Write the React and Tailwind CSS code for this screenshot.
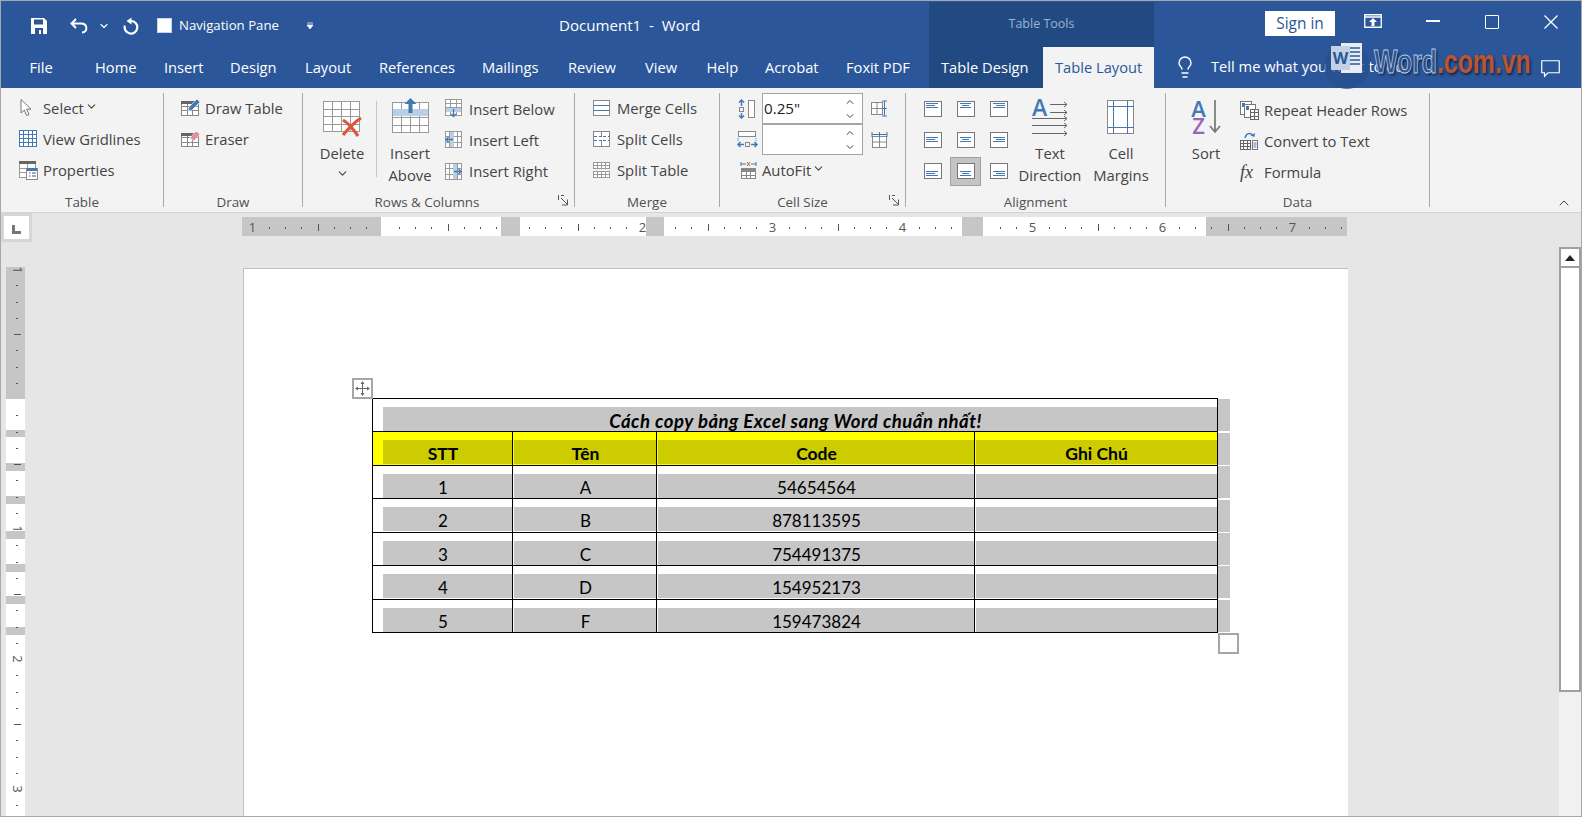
import { ChevronDown, ChevronUp, Lightbulb } from 'lucide-react'

const BLUE = '#4279b5'
const GREY = '#7c7c7c'

// grid of thin lines, used by most of the table icons
function Cells({ x = 0.5, y = 0.5, w, h, cols, rows, stroke = GREY }) {
  const v = []
  const hz = []
  for (let i = 1; i < cols; i++) v.push(x + Math.round((w * i) / cols))
  for (let i = 1; i < rows; i++) hz.push(y + Math.round((h * i) / rows))
  return (
    <g stroke={stroke} fill="none" shapeRendering="crispEdges">
      <rect x={x} y={y} width={w} height={h} fill="#fff" />
      {v.map((p) => <line key={p} x1={p} x2={p} y1={y} y2={y + h} />)}
      {hz.map((p) => <line key={p} x1={x} x2={x + w} y1={p} y2={p} />)}
    </g>
  )
}

const Svg = ({ w, h, children }) => (
  <svg width={w} height={h} viewBox={`0 0 ${w} ${h}`} className="block shrink-0 overflow-visible">{children}</svg>
)

const SelectIcon = () => (
  <Svg w={14} h={19}><path d="M2 1.500v13.500l3.200-3 2.400 5.500 2.400-1-2.400-5.300h4.400z" fill="#fff" stroke="#777" /></Svg>
)
const GridlinesIcon = () => <Svg w={18} h={17}><Cells w={17} h={16} cols={4} rows={4} stroke={BLUE} /></Svg>
const PropertiesIcon = () => (
  <Svg w={19} h={19}>
    <Cells y={2.500} w={16} h={14} cols={2} rows={3} stroke="#999" />
    <rect x="0" y="0" width="17" height="3" fill="#666" />
    <rect x="7.500" y="7.500" width="11" height="11" fill="#fff" stroke="#888" />
    <rect x="8" y="7" width="10" height="3" fill={BLUE} />
    <path d="M10 12h1.500M13 12h4M10 15h1.500M13 15h4" stroke="#555" />
  </Svg>
)
const DrawTableIcon = () => (
  <Svg w={20} h={19}>
    <Cells y={3.500} w={17} h={14} cols={3} rows={3} stroke="#888" />
    <rect x="0" y="3" width="18" height="3" fill="#666" />
    <path d="M7 13l1-4 8-8 3 3-8 8z" fill={BLUE} stroke="#fff" strokeWidth=".6" />
  </Svg>
)
const EraserIcon = () => (
  <Svg w={20} h={18}>
    <Cells y={3.500} w={17} h={13} cols={3} rows={3} stroke="#888" />
    <rect x="0" y="3" width="18" height="3" fill="#666" />
    <path d="M9 8l6-7 4 3-6 7z" fill="#e8899a" stroke="#fff" strokeWidth=".6" />
  </Svg>
)
const DeleteIcon = () => (
  <Svg w={39} h={37}>
    <Cells w={36} h={30} cols={4} rows={4} stroke="#999" />
    <path d="M20 34c5-6 10-12 18-17M20 19c5 3 11 10 15 16" stroke="#d9583b" strokeWidth="3.200" fill="none" />
  </Svg>
)
const InsertAboveIcon = () => (
  <Svg w={37} h={36}>
    <g transform="translate(0 5)"><Cells w={36} h={30} cols={4} rows={4} stroke="#999" /></g>
    <rect x="1" y="12" width="35" height="7" fill="#b8cfe6" />
    <path d="M18.500 1l-6 6h4v9h4V7h4z" fill={BLUE} />
  </Svg>
)
const InsertBelowIcon = () => (
  <Svg w={17} h={19}>
    <Cells w={16} h={16} cols={3} rows={4} stroke="#999" />
    <rect x="1" y="9" width="15" height="4" fill="#b8cfe6" />
    <path d="M8.500 10v7M6 15l2.500 2.500L11 15" stroke={BLUE} strokeWidth="1.400" fill="none" />
  </Svg>
)
const InsertLeftIcon = () => (
  <Svg w={17} h={17}>
    <Cells w={16} h={16} cols={4} rows={3} stroke="#999" />
    <rect x="5" y="1" width="4" height="15" fill="#b8cfe6" />
    <path d="M8 8.500H1M3.500 6L1 8.500 3.500 11" stroke={BLUE} strokeWidth="1.400" fill="none" />
  </Svg>
)
const InsertRightIcon = () => (
  <Svg w={17} h={17}>
    <Cells w={16} h={16} cols={4} rows={3} stroke="#999" />
    <rect x="8" y="1" width="4" height="15" fill="#b8cfe6" />
    <path d="M9 8.500h7M13.500 6L16 8.500 13.500 11" stroke={BLUE} strokeWidth="1.400" fill="none" />
  </Svg>
)
const MergeIcon = () => (
  <Svg w={17} h={16}>
    <Cells w={16} h={15} cols={1} rows={3} stroke="#888" />
    <path d="M1 5.500h15M1 10.500h15" stroke={BLUE} shapeRendering="crispEdges" />
  </Svg>
)
const SplitCellsIcon = () => (
  <Svg w={17} h={16}>
    <rect x=".5" y=".5" width="16" height="15" fill="#fff" stroke="#888" shapeRendering="crispEdges" />
    <path d="M8.500 1v4M8.500 10v5" stroke="#888" shapeRendering="crispEdges" />
    <path d="M1 5.500h15M1 9.500h15" stroke={BLUE} strokeDasharray="3 1.500" shapeRendering="crispEdges" />
  </Svg>
)
const SplitTableIcon = () => (
  <Svg w={17} h={16}>
    <Cells w={16} h={6} cols={4} rows={2} stroke="#999" />
    <g transform="translate(0 9)"><Cells w={16} h={6} cols={4} rows={2} stroke="#999" /></g>
  </Svg>
)
const HeightIcon = () => (
  <Svg w={19} h={20}>
    <rect x="11.500" y="1.500" width="6" height="17" fill="#fff" stroke="#888" />
    <rect x="2.500" y="8.500" width="4" height="4" fill="none" stroke="#888" />
    <path d="M4.500 7V1M2 3.500L4.500 1 7 3.500M4.500 14v5M2 16.500L4.500 19 7 16.500" stroke={BLUE} strokeWidth="1.500" fill="none" />
  </Svg>
)
const WidthIcon = () => (
  <Svg w={20} h={19}>
    <rect x="1.500" y="1.500" width="17" height="5" fill="#fff" stroke="#888" />
    <rect x="8.500" y="12.500" width="4" height="4" fill="none" stroke="#888" />
    <path d="M7 14.500H1M3.500 12L1 14.500 3.500 17M14 14.500h6M17.500 12l2.500 2.500-2.500 2.500" stroke={BLUE} strokeWidth="1.500" fill="none" />
    <path d="M1 8v3M19 8v3" stroke={BLUE} strokeDasharray="1 1" />
  </Svg>
)
const DistRowsIcon = () => (
  <Svg w={17} h={17}>
    <rect x=".5" y="2.500" width="11" height="12" fill="#fff" stroke="#888" />
    <path d="M6 2.500v12M.5 8.500h11" stroke="#888" />
    <path d="M13.500 1v15M11 1h5M11 8.500h5M11 16h5" stroke={BLUE} />
  </Svg>
)
const DistColsIcon = () => (
  <Svg w={17} h={17}>
    <rect x="1.500" y="5.500" width="14" height="11" fill="#fff" stroke="#888" />
    <path d="M8.500 5.500v11M1.500 11h14" stroke="#888" />
    <path d="M1 3.500h15M1 1v5M8.500 1v5M16 1v5" stroke={BLUE} />
  </Svg>
)
const AutoFitIcon = () => (
  <Svg w={18} h={18}>
    <g transform="translate(1 7)"><Cells w={14} h={10} cols={3} rows={3} stroke="#888" /></g>
    <rect x="1" y="7" width="15" height="3" fill="#888" />
    <path d="M1 3h5M1 1v4M16 3h-5M16 1v4" stroke={BLUE} />
    <path d="M7 1l3 4M10 1L7 5" stroke="#c9583c" />
  </Svg>
)

// x offsets of the blue text lines per horizontal align, y offset per vertical align
function AlignIcon({ h, v }) {
  const lines = h === 'l' ? [[2, 12], [2, 9], [2, 12]] : h === 'c' ? [[3, 11], [5, 7], [3, 11]] : [[3, 12], [6, 9], [3, 12]]
  const top = v === 't' ? 2 : v === 'm' ? 5 : 8
  return (
    <Svg w={18} h={16}>
      <rect x=".5" y=".5" width="17" height="15" fill="#fff" stroke="#777" shapeRendering="crispEdges" />
      {lines.map(([x, len], i) => (
        <rect key={i} x={x} y={top + i * 2} width={len} height="1" fill={BLUE} />
      ))}
    </Svg>
  )
}

const TextDirectionIcon = () => (
  <Svg w={37} h={36}>
    <text x="0" y="16" fontFamily="Open Sans, sans-serif" fontWeight="600" fontSize="23" fill={BLUE}>A</text>
    <g stroke="#666" fill="none">
      <path d="M18 4.500h17M32 2l3 2.500-3 2.500M18 12.500h17M32 10l3 2.500-3 2.500" />
      <path d="M0 18.500h35M32 16l3 2.500-3 2.500M0 25.500h35M32 23l3 2.500-3 2.500M0 33.500h35M32 31l3 2.500-3 2.500" />
    </g>
  </Svg>
)
const CellMarginsIcon = () => (
  <Svg w={28} h={35}>
    <rect x=".5" y=".5" width="26" height="33" fill="#fff" stroke="#888" shapeRendering="crispEdges" />
    <path d="M6.500 1v33M20.500 1v33M1 6.500h26M1 27.500h26" stroke={BLUE} strokeWidth="1.200" shapeRendering="crispEdges" />
  </Svg>
)
const SortIcon = () => (
  <div className="flex">
    <div className="flex w-[16px] flex-col items-center text-[22px] leading-[17px] font-semibold">
      <span className="text-[#4279b5]">A</span>
      <span className="text-[#9a63b8]">Z</span>
    </div>
    <svg width="14" height="34" viewBox="0 0 14 34" className="ml-[1px]">
      <path d="M7 0v31M2 26l5 6 5-6" stroke="#777" strokeWidth="1.700" fill="none" />
    </svg>
  </div>
)
const RepeatIcon = () => (
  <Svg w={18} h={18}>
    <rect x=".5" y=".5" width="11" height="13" fill="#fff" stroke="#777" />
    <rect x="2" y="2" width="3" height="4" fill={BLUE} />
    <rect x="4.500" y="3.500" width="11" height="13" fill="#fff" stroke="#777" />
    <rect x="6" y="5" width="3" height="4" fill={BLUE} />
    <g transform="translate(9.500 7.500)"><Cells w={8} h={10} cols={2} rows={3} stroke="#666" /></g>
  </Svg>
)
const ConvertIcon = () => (
  <Svg w={18} h={19}>
    <g transform="translate(0 9)"><Cells w={10} h={9} cols={3} rows={3} stroke="#666" /></g>
    <rect x="12.500" y="9.500" width="5" height="9" fill="#fff" stroke="#777" />
    <path d="M13.500 12h3M13.500 14h3M13.500 16h3" stroke={BLUE} />
    <path d="M5 7c1-5 6-6 8-2" stroke={BLUE} strokeWidth="1.400" fill="none" />
    <path d="M10.500 4.500l4 1.500.500-4z" fill={BLUE} />
  </Svg>
)

// one small ribbon command: icon then label
function Cmd({ icon, label, box = 'w-[24px]', chevron }) {
  return (
    <div className="flex h-[31.300px] -translate-y-px items-center whitespace-nowrap">
      <div className={`${box} flex items-center`}>{icon}</div>
      <span>{label}</span>
      {chevron && <ChevronDown size={13} strokeWidth={2} className="ml-[1px] mt-[-2px]" />}
    </div>
  )
}

function Big({ icon, top, lines, width, chevron }) {
  return (
    <div className={`${width} flex shrink-0 flex-col items-center`}>
      <div className={`h-[49px] ${top}`}>{icon}</div>
      {lines.map((l) => <div key={l} className="h-[22px] whitespace-nowrap leading-[22px]">{l}</div>)}
      {chevron && <ChevronDown size={13} strokeWidth={2} className="mt-[3px]" />}
    </div>
  )
}

const Launcher = () => (
  <svg width="11" height="11" viewBox="0 0 11 11" className="absolute bottom-[1px] right-[5px]">
    <path d="M.5 0v5M3 .5h3M3 3l6 6M9.500 4.500V10H4" stroke="#555" fill="none" />
  </svg>
)

function Group({ width, title, titleClass = '', launcher, children }) {
  return (
    <div className={`${width} relative h-[114px] shrink-0 border-r border-[#a9a9a9]`}>
      <div className="h-[103px]">{children}</div>
      <div className={`h-[12px] text-center text-[13.400px] leading-[12px] text-[#505050] ${titleClass}`}>{title}</div>
      {launcher && <Launcher />}
    </div>
  )
}

function Spinner({ value }) {
  return (
    <div className="flex h-[31px] w-[101px] items-center justify-between border border-[#a5a5a5] bg-white pl-[1px] pr-[6px] text-[15.200px] text-[#222]">
      <span>{value}</span>
      <span className="flex flex-col gap-[2px] text-[#444]">
        <ChevronUp size={12} strokeWidth={2} />
        <ChevronDown size={12} strokeWidth={2} />
      </span>
    </div>
  )
}

const tabs = [
  ['File', 'w-[65.500px]'], ['Home', 'w-[69px]'], ['Insert', 'w-[66px]'], ['Design', 'w-[75px]'],
  ['Layout', 'w-[74px]'], ['References', 'w-[103px]'], ['Mailings', 'w-[86px]'], ['Review', 'w-[77px]'],
  ['View', 'w-[61.500px]'], ['Help', 'w-[58.500px]'], ['Acrobat', 'w-[81px]'], ['Foxit PDF', 'w-[83px]'],
]

// margin blocks of the table columns hide the ruler ticks
const inBlock = (x) => (x > 258 && x < 279) || (x > 403 && x < 423) || (x > 719 && x < 742)

function HRuler() {
  const ticks = []
  for (let k = -8; k < 60; k++) ticks.push(k)
  return (
    <div className="relative ml-[210px] mt-[4px] flex h-[19px] w-[1105px]">
      <div className="w-[139px] bg-[#c6c6c6]" />
      <div className="w-[120px] bg-white" />
      <div className="w-[19px] bg-[#c6c6c6]" />
      <div className="w-[126px] bg-white" />
      <div className="w-[18px] bg-[#c6c6c6]" />
      <div className="w-[298px] bg-white" />
      <div className="w-[21px] bg-[#c6c6c6]" />
      <div className="w-[223px] bg-white" />
      <div className="w-[141px] bg-[#c6c6c6]" />
      <svg width="1105" height="19" className="absolute left-0 top-0 overflow-visible">
        {ticks.map((k) => {
          const x = 140.500 + k * 16.250
          if (x < 0 || x > 1100 || k === 0) return null
          if (k % 8 === 0) {
            if (k / 8 === 1) return null
            return <text key={k} x={x} y="15" textAnchor="middle" fontSize="13" fontFamily="Open Sans, sans-serif" fill="#555">{Math.abs(k / 8)}</text>
          }
          if (inBlock(x)) return null
          if (((k % 8) + 8) % 8 === 4) return <rect key={k} x={Math.round(x)} y="7" width="1" height="7" fill="#555" />
          return <rect key={k} x={Math.round(x)} y="10" width="1" height="2" fill="#555" />
        })}
      </svg>
    </div>
  )
}

function VRuler() {
  const ticks = []
  for (let k = -7; k < 26; k++) ticks.push(k)
  return (
    <div className="relative ml-[5px] mt-[25px] flex h-[549px] w-[19px] shrink-0 flex-col">
      <div className="h-[132px] bg-[#c6c6c6]" />
      <div className="h-[31px] bg-white" />
      <div className="h-[7px] bg-[#c6c6c6]" />
      <div className="h-[26px] bg-white" />
      <div className="h-[8px] bg-[#c6c6c6]" />
      <div className="h-[25px] bg-white" />
      <div className="h-[8px] bg-[#c6c6c6]" />
      <div className="h-[27px] bg-white" />
      <div className="h-[8px] bg-[#c6c6c6]" />
      <div className="h-[25px] bg-white" />
      <div className="h-[8px] bg-[#c6c6c6]" />
      <div className="h-[24px] bg-white" />
      <div className="h-[8px] bg-[#c6c6c6]" />
      <div className="h-[23px] bg-white" />
      <div className="h-[8px] bg-[#c6c6c6]" />
      <div className="flex-1 bg-white" />
      <svg width="19" height="549" className="absolute left-0 top-0 overflow-visible">
        <g transform="translate(11 3) rotate(90)">
          <text x="0" y="4" textAnchor="middle" fontSize="13" fontFamily="Open Sans, sans-serif" fill="#555">1</text>
        </g>
        {ticks.map((k) => {
          const y = 132 + k * 16.250
          if (k === 0) return null
          if (k % 8 === 0) {
            return (
              <g key={k} transform={`translate(11 ${y}) rotate(90)`}>
                <text x="0" y="4" textAnchor="middle" fontSize="13" fontFamily="Open Sans, sans-serif" fill="#555">{k / 8}</text>
              </g>
            )
          }
          if (((k % 8) + 8) % 8 === 4) return <rect key={k} x="8" y={Math.round(y)} width="7" height="1" fill="#555" />
          return <rect key={k} x="10" y={Math.round(y)} width="2" height="1" fill="#555" />
        })}
      </svg>
    </div>
  )
}

const rows = [
  ['1', 'A', '54654564'], ['2', 'B', '878113595'], ['3', 'C', '754491375'],
  ['4', 'D', '154952173'], ['5', 'F', '159473824'],
]

function Mark() {
  return <td className="border-0 p-0 align-middle"><div className="h-[32px] bg-[#c6c6c6]" /></td>
}

function DocTable() {
  const td = 'h-[33.450px] border border-black p-0 align-top'
  const head = 'h-[33.450px] border border-black bg-[#ffff00] p-0 align-top'
  const band = 'mt-[8px] h-[24px] text-center leading-[28px]'
  return (
    <div className="relative ml-[128px] w-[857px]">
      <table className="w-[857px] table-fixed border-collapse font-['Lato',sans-serif] text-[17px] text-black">
        <colgroup>
          <col className="w-[140px]" />
          <col className="w-[144px]" />
          <col className="w-[318px]" />
          <col className="w-[243px]" />
          <col className="w-[12px]" />
        </colgroup>
        <tbody>
          <tr>
            <td colSpan={4} className={td}>
              <div className={`${band} ml-[10px] bg-[#c6c6c6] pr-[9px] text-[18.500px] font-bold italic tracking-[0.5px]`}>Cách copy bảng Excel sang Word chuẩn nhất!</div>
            </td>
            <Mark />
          </tr>
          <tr className="text-[17.500px] font-bold">
            <td className={head}><div className={`${band} ml-[10px] bg-[#cccc00] pr-[9px]`}>STT</div></td>
            <td className={head}><div className={`${band} ml-px bg-[#cccc00] pl-px`}>Tên</div></td>
            <td className={head}><div className={`${band} ml-px bg-[#cccc00] pl-px`}>Code</div></td>
            <td className={head}><div className={`${band} ml-px bg-[#cccc00]`}>Ghi Chú</div></td>
            <Mark />
          </tr>
          {rows.map((r) => (
            <tr key={r[0]}>
              <td className={td}><div className={`${band} ml-[10px] bg-[#c6c6c6] pr-[9px]`}>{r[0]}</div></td>
              <td className={td}><div className={`${band} ml-px bg-[#c6c6c6] pl-px`}>{r[1]}</div></td>
              <td className={td}><div className={`${band} ml-px bg-[#c6c6c6] pl-px`}>{r[2]}</div></td>
              <td className={td}><div className={`${band} ml-px bg-[#c6c6c6]`}>&nbsp;</div></td>
              <Mark />
            </tr>
          ))}
        </tbody>
      </table>
      {/* table move handle and resize handle sit over the page */}
      <div className="absolute left-[-20px] top-[-20px] flex h-[21px] w-[21px] items-center justify-center border-2 border-[#a6a6a6] bg-white">
        <svg width="15" height="15" viewBox="0 0 15 15">
          <path d="M7.500 2v11M2 7.500h11" stroke="#666" />
          <path d="M7.500 0l-2 3h4zM7.500 15l-2-3h4zM0 7.500l3-2v4zM15 7.500l-3-2v4z" fill="#666" />
        </svg>
      </div>
      <div className="absolute left-[846px] top-[235px] h-[21px] w-[21px] border-2 border-[#a6a6a6] bg-white" />
    </div>
  )
}

export default function App() {
  return (
    <div className="relative flex h-[817px] w-full flex-col overflow-hidden border border-[#a8a8a8] bg-[#e6e6e6] font-['Open_Sans',sans-serif] text-[14.800px] text-[#444]">
      {/* title bar */}
      <div className="flex h-[46px] shrink-0 items-start bg-[#2b579a] text-white">
        <div className="flex w-[558px] items-center pt-[15px]">
          <svg width="16" height="16" viewBox="0 0 16 16" className="ml-[30px]">
            <path d="M0 0h13l3 3v13H0z" fill="#fff" />
            <rect x="3" y="1.500" width="9" height="5" fill="#2b579a" />
            <rect x="4" y="10" width="8" height="6" fill="#2b579a" />
            <rect x="8" y="12" width="2" height="4" fill="#fff" />
          </svg>
          <svg width="18" height="16" viewBox="0 0 18 16" className="ml-[23px]">
            <path d="M6 1L1.500 5.500 6 10M2 5.500h9c7 0 7 9 1 9" fill="none" stroke="#fff" strokeWidth="2" />
          </svg>
          <ChevronDown size={12} strokeWidth={2.200} className="ml-[10px]" />
          <svg width="18" height="18" viewBox="0 0 18 18" className="ml-[12px]">
            <path d="M9 4a6.300 6.300 0 1 1-6.100 4.600" fill="none" stroke="#fff" strokeWidth="2.200" />
            <path d="M9.500.500v7L4.500 4z" fill="#fff" />
          </svg>
          <div className="ml-[17px] h-[15px] w-[15px] border border-[#c9d4e6] bg-white" />
          <span className="ml-[7px] w-[120px] whitespace-nowrap text-[13.200px]">Navigation Pane</span>
          <svg width="8" height="8" viewBox="0 0 8 8" className="ml-[7px]">
            <path d="M1 1h6M1 3h6l-3 4z" fill="#fff" stroke="#fff" strokeWidth=".7" />
          </svg>
        </div>
        <div className="w-[370px] pt-[14px] text-[15.100px] leading-[21px] whitespace-pre">Document1  -  Word</div>
        <div className="h-[45px] w-[225px] self-end bg-[#214a82] pt-[13px] text-center text-[12.500px] text-[#9db2d2]">Table Tools</div>
        <div className="ml-[111px] mt-[10px] h-[25px] w-[70px] bg-white text-center text-[15.400px] leading-[25px] text-[#2b579a]">Sign in</div>
        <svg width="18" height="14" viewBox="0 0 18 14" className="ml-[29px] mt-[13px]">
          <path d="M.750.750h16.500v12.500H.750zM1 3h16" fill="none" stroke="#fff" strokeWidth="1.300" />
          <path d="M9 4l-4 4h2.500v4h3V8H13z" fill="#fff" />
        </svg>
        <div className="ml-[44px] mt-[19px] h-[1.500px] w-[14px] bg-white" />
        <div className="ml-[45px] mt-[14px] h-[14px] w-[14px] rounded-[1px] border-[1.500px] border-white" />
        <svg width="14" height="14" viewBox="0 0 14 14" className="ml-[45px] mt-[14px]">
          <path d="M.500.500l13 13M13.500.500l-13 13" stroke="#fff" strokeWidth="1.300" />
        </svg>
      </div>

      {/* tab row */}
      <div className="relative flex h-[41px] shrink-0 items-stretch bg-[#2b579a] pl-[28.500px] text-[14.700px] text-white">
        {tabs.map(([t, w]) => (
          <div key={t} className={`${w} whitespace-nowrap pt-[10px] leading-[21px]`}>{t}</div>
        ))}
        <div className="w-[114px] whitespace-nowrap bg-[#214a82] pl-[12px] pt-[10px] leading-[21px]">Table Design</div>
        <div className="w-[111px] whitespace-nowrap bg-[#f3f3f3] pl-[12px] pt-[10px] leading-[21px] text-[#2b579a]">Table Layout</div>
        <Lightbulb size={24} strokeWidth={1.400} className="ml-[19px] mt-[8px]" />
        <div className="ml-[14px] whitespace-nowrap pt-[9px] leading-[21px]">Tell me what you want to do</div>
        <svg width="19" height="18" viewBox="0 0 19 18" className="absolute left-[1540px] top-[13px]">
          <path d="M.750.750h17.500v12H7l-3.500 3.500v-3.500H.750z" fill="none" stroke="#fff" strokeWidth="1.200" />
        </svg>

        {/* watermark sits on top of the tab row */}
        <div className="absolute left-[1323px] top-[-4px] h-[46px] w-[46px] rounded-full bg-[#27508f]/80" />
        <svg width="32" height="31" viewBox="0 0 32 31" className="absolute left-[1330px] top-[-4px]">
          <rect x="10" y="0" width="21" height="30" fill="#e8edf4" />
          <path d="M19 5h10M19 9h10M19 13h10M19 17h10M19 21h10" stroke="#2b579a" strokeWidth="1.600" />
          <rect x="0" y="3" width="19" height="24" fill="#c3d1e4" />
          <text x="9.500" y="21" textAnchor="middle" fontSize="16" fontWeight="700" fontFamily="Open Sans, sans-serif" fill="#2b579a">W</text>
        </svg>
        <div className="absolute left-[1373px] top-[-6px] origin-left scale-x-[0.730] whitespace-nowrap font-['Liberation_Sans',sans-serif] text-[34px] leading-[40px] font-bold [text-shadow:2px_2px_3px_rgba(10,30,70,0.9)]">
          <span className="text-[#2b5490] [-webkit-text-stroke:1px_#b9cbe4]">Word</span>
          <span className="text-[#bd5430]">.com.vn</span>
        </div>
      </div>

      {/* ribbon */}
      <div className="flex h-[125px] shrink-0 border-b border-[#d2d2d2] bg-[#f3f3f3] pt-[5px]">
        <Group width="w-[163px]" title="Table">
          <div className="pl-[18px]">
            <Cmd icon={<SelectIcon />} label="Select" chevron />
            <Cmd icon={<GridlinesIcon />} label="View Gridlines" />
            <Cmd icon={<PropertiesIcon />} label="Properties" />
          </div>
        </Group>
        <Group width="w-[139px]" title="Draw">
          <div className="pl-[17px]">
            <Cmd icon={<DrawTableIcon />} label="Draw Table" />
            <Cmd icon={<EraserIcon />} label="Eraser" />
          </div>
        </Group>
        <Group width="w-[272px]" title="Rows & Columns" titleClass="pr-[23px]" launcher>
          <div className="flex pl-[20px]">
            <Big width="w-[38px]" top="pt-[8px]" icon={<DeleteIcon />} lines={['Delete']} chevron />
            <div className="ml-[15px] mt-[8px] h-[76px] w-px bg-[#c6c6c6]" />
            <Big width="ml-[9px] w-[48px]" top="pt-[4px]" icon={<InsertAboveIcon />} lines={['Insert', 'Above']} />
            <div className="ml-[11px] mt-[1px]">
              <Cmd icon={<InsertBelowIcon />} label="Insert Below" />
              <Cmd icon={<InsertLeftIcon />} label="Insert Left" />
              <Cmd icon={<InsertRightIcon />} label="Insert Right" />
            </div>
          </div>
        </Group>
        <Group width="w-[145px]" title="Merge">
          <div className="pl-[18px]">
            <Cmd icon={<MergeIcon />} label="Merge Cells" />
            <Cmd icon={<SplitCellsIcon />} label="Split Cells" />
            <Cmd icon={<SplitTableIcon />} label="Split Table" />
          </div>
        </Group>
        <Group width="w-[186px]" title="Cell Size" titleClass="pr-[20px]" launcher>
          <div className="pl-[17px]">
            <div className="flex items-center">
              <div className="w-[25px]"><HeightIcon /></div>
              <Spinner value={'0.25"'} />
              <div className="ml-[8px]"><DistRowsIcon /></div>
            </div>
            <div className="flex items-center">
              <div className="w-[25px]"><WidthIcon /></div>
              <Spinner value="" />
              <div className="ml-[8px]"><DistColsIcon /></div>
            </div>
            <div className="pl-[3px]">
              <Cmd icon={<AutoFitIcon />} box="w-[22px]" label="AutoFit" chevron />
            </div>
          </div>
        </Group>
        <Group width="w-[260px]" title="Alignment">
          <div className="flex pl-[10px]">
            <div className="grid grid-cols-[33px_33px_33px] grid-rows-[31.300px_31.300px_31.300px]">
              <div className="flex items-center justify-center"><AlignIcon h="l" v="t" /></div>
              <div className="flex items-center justify-center"><AlignIcon h="c" v="t" /></div>
              <div className="flex items-center justify-center"><AlignIcon h="r" v="t" /></div>
              <div className="flex items-center justify-center"><AlignIcon h="l" v="m" /></div>
              <div className="flex items-center justify-center"><AlignIcon h="c" v="m" /></div>
              <div className="flex items-center justify-center"><AlignIcon h="r" v="m" /></div>
              <div className="flex items-center justify-center"><AlignIcon h="l" v="b" /></div>
              <div className="m-px flex items-center justify-center border border-[#a0a0a0] bg-[#c4c4c4]"><AlignIcon h="c" v="b" /></div>
              <div className="flex items-center justify-center"><AlignIcon h="r" v="b" /></div>
            </div>
            <Big width="w-[70px]" top="pt-[7px]" icon={<TextDirectionIcon />} lines={['Text', 'Direction']} />
            <Big width="ml-px w-[70px]" top="pt-[7px]" icon={<CellMarginsIcon />} lines={['Cell', 'Margins']} />
          </div>
        </Group>
        <Group width="w-[264px]" title="Data">
          <div className="flex pl-[20px]">
            <Big width="w-[40px]" top="pt-[7px]" icon={<SortIcon />} lines={['Sort']} />
            <div className="ml-[14px] mt-[2px]">
              <Cmd icon={<RepeatIcon />} label="Repeat Header Rows" />
              <Cmd icon={<ConvertIcon />} label="Convert to Text" />
              <Cmd icon={<span className="font-['Liberation_Serif',serif] text-[18px] italic leading-none">fx</span>} label="Formula" />
            </div>
          </div>
        </Group>
        <div className="relative flex-1">
          <ChevronUp size={16} strokeWidth={1.500} className="absolute bottom-[1px] right-[9px]" />
        </div>
      </div>

      {/* ruler row */}
      <div className="relative flex h-[29px] shrink-0">
        <div className="flex h-[29px] w-[31px] items-center justify-center border-[3px] border-[#d6d6d6] bg-white">
          <div className="mt-[3px] h-[9px] w-[9px] border-b-[3px] border-l-[3px] border-[#777]" />
        </div>
        <HRuler />
      </div>

      {/* document area */}
      <div className="flex min-h-0 flex-1">
        <VRuler />
        <div className="ml-[218px] mt-[26px] w-[1105px] border-l border-t border-[#c0c0c0] bg-white pt-[129px]">
          <DocTable />
        </div>
        <div className="ml-[211px] mt-[5px] flex w-[22px] flex-col bg-[#f1f1f1]">
          <div className="flex h-[21px] items-center justify-center border-2 border-[#a0a0a0] bg-white">
            <div className="h-0 w-0 border-x-[5px] border-b-[6px] border-x-transparent border-b-[#222]" />
          </div>
          <div className="h-[424px] border-x-2 border-b-2 border-[#a0a0a0] bg-white" />
        </div>
      </div>
    </div>
  )
}
